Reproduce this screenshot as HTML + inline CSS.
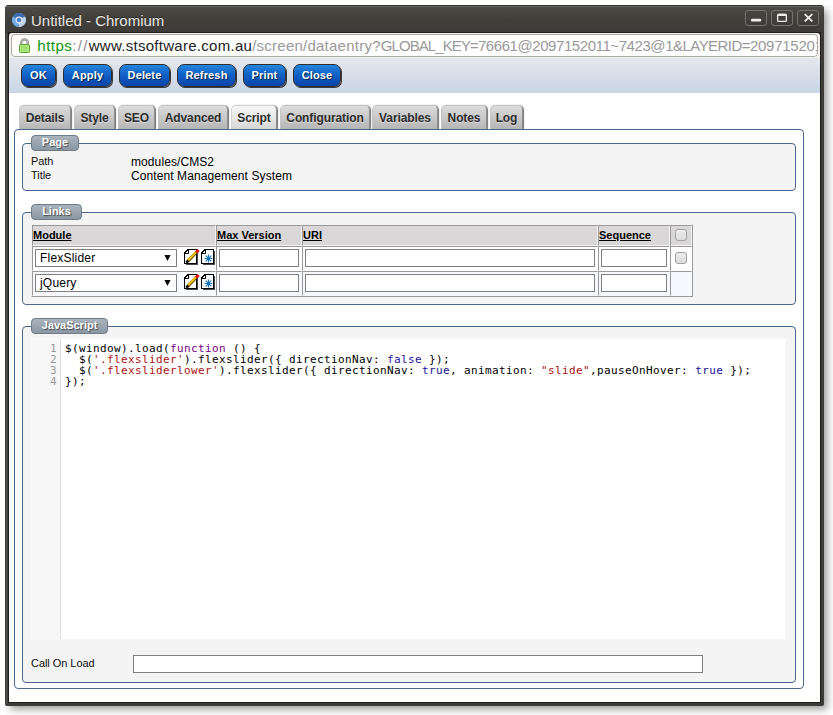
<!DOCTYPE html>
<html><head><meta charset="utf-8"><title>Untitled - Chromium</title>
<style>
*{box-sizing:border-box;margin:0;padding:0}
html,body{width:833px;height:715px;overflow:hidden;background:#fff}
body{position:relative;font-family:"Liberation Sans",sans-serif;font-size:12px;color:#000}
.abs{position:absolute}
#win{position:absolute;left:5px;top:5px;width:819px;height:701px;background:#3c3b37;border-radius:4px 4px 2px 2px;
 box-shadow:4px 4px 9px -1px rgba(0,0,0,.42);clip-path:inset(0 -20px -20px 0)}
#win:before{content:"";position:absolute;left:1px;top:3px;width:1px;height:696px;background:#55544f}
#win:after{content:"";position:absolute;left:3px;top:27px;width:813px;height:671px;background:#1f1e1a}
#titlebar{position:absolute;left:0;top:0;width:819px;height:28px;border-radius:4px 4px 0 0;
 background:linear-gradient(#35342f 0,#35342f 1px,#65645f 1px,#65645f 2px,#4c4b46 2px,#403f3a 50%,#3c3b37 100%)}
#title{position:absolute;left:26px;top:7px;font:15px/17px "Liberation Sans",sans-serif;color:#e9e7e2;white-space:nowrap;text-shadow:0 -1px 0 rgba(0,0,0,.35)}
.wb{position:absolute;top:5px;width:22px;height:16px;border:1px solid #74736e;border-radius:3px;background:linear-gradient(#45443f,#3d3c38)}
#addrbg{position:absolute;left:4px;top:28px;width:811px;height:25px;background:#f1f0ee;border-radius:3px 3px 0 0;z-index:1}
#addr{position:absolute;left:2px;top:1px;width:807px;height:23px;background:#fff;border:1px solid #aeaba3;border-radius:4px;overflow:hidden}
#urlclip{position:absolute;left:0;top:0;width:804.6px;height:21px;overflow:hidden}
#url{position:absolute;left:25.3px;top:2px;font:15px/17px "Liberation Sans",sans-serif;white-space:nowrap;color:#222}
#page{position:absolute;left:4px;top:53px;width:811px;height:644px;background:#fff;overflow:hidden;z-index:1}
#toolbar{position:absolute;left:0;top:0;width:811px;height:35px;background:linear-gradient(#e4e8ed 0,#d8dde8 50%,#d3dbe8 65%,#cad7e6 100%)}
.btn{position:absolute;top:6px;height:23px;letter-spacing:.15px;border:1px solid #2e2e30;border-radius:7px;background:linear-gradient(#2585dc 0,#1162c8 45%,#0a44a8 100%);
 color:#fff;font:bold 11px "Liberation Sans",sans-serif;text-align:center;line-height:21px;text-shadow:1px 1px 1px rgba(0,0,0,.6);box-shadow:1px 1px 0 rgba(40,40,40,.9)}
.tab{position:absolute;top:47px;height:24px;border:1px solid #c4c4c4;border-bottom:0;border-radius:5px 5px 0 0;background:linear-gradient(#dcdcdc,#c8c8c8 50%,#b6b6b6);
 color:#2d2d2d;font:bold 12px "Liberation Sans",sans-serif;letter-spacing:-.1px;text-align:center;line-height:24px;border-right-color:#8e8e8e;box-shadow:1px 0 1px rgba(0,0,0,.55);text-shadow:0 1px 0 rgba(255,255,255,.45)}
.tab.sel{background:linear-gradient(#f6f6f6,#e8e8e8 50%,#d6d6d6);border-color:#d0d0d0 #8e8e8e #d0d0d0 #d0d0d0}
#panel{position:absolute;left:5px;top:71px;width:790px;height:560px;border:1px solid #48678a;border-radius:4px;background:#fff}
.fs{position:absolute;left:7px;width:774px;border:1px solid #48678a;border-radius:4px;background:#f4f4f4}
.lg{position:absolute;left:8px;top:-9px;height:16px;border:1px solid #6f7c89;border-radius:4px;background:linear-gradient(#a9b3bd,#8b97a3);
 color:#fff;font:bold 11px "Liberation Sans",sans-serif;text-align:center;line-height:13px;text-shadow:1px 1px 1px rgba(0,0,0,.55)}
.lbl{position:absolute;font:11px "Liberation Sans",sans-serif;color:#111;white-space:nowrap;letter-spacing:-.05px}
.val{position:absolute;font:12px "Liberation Sans",sans-serif;color:#000;white-space:nowrap;letter-spacing:.09px}
table{position:absolute;left:8px;top:11px;border-collapse:separate;border-spacing:0;border:1px solid;border-color:transparent #999 #999 transparent}
td,th{border:1px solid;border-color:#999 #fff #fff #999;padding:0;vertical-align:middle;text-align:left;position:relative}
th{background:#d9d7d7;border-color:#999 #f3f3f3 #f3f3f3 #999;height:21px;font:bold 11px/13px "Liberation Sans",sans-serif;text-decoration:underline;vertical-align:top;padding-top:3px}
td{height:25px;background:#fff}
tr.alt td{background:#f8f8ff;border-color:#999 #f8f8ff #f8f8ff #999}
.in{display:block;position:absolute;border:1px solid #7f7f7f;background:#fff;height:18px;top:2px;left:2px}
.in span{position:absolute;font:12px "Liberation Sans",sans-serif;letter-spacing:.2px;white-space:nowrap}
.cb{position:absolute;width:12px;height:12px;border:1px solid #a3a3a3;border-radius:3px;background:linear-gradient(#ececec,#dcdcdc)}
.ic{position:absolute;top:2px}
#cm{position:absolute;left:9px;top:12px;width:753px;height:300px;background:#fff;overflow:hidden;box-shadow:0 0 0 1px rgba(255,255,255,.4)}
#gut{position:absolute;left:0;top:0;width:29px;height:300px;background:#f7f7f7;border-right:1px solid #e0e0e0}
pre{font:11px/11px "DejaVu Sans Mono","Liberation Mono",monospace;letter-spacing:0.378px;white-space:pre;position:absolute}
#ln{left:0;top:4px;width:25px;text-align:right;color:#999}
#code{left:33px;top:4px;color:#000}
.k{color:#708}.s{color:#a11}.a{color:#219}
</style></head><body>
<div id="win">
 <div id="titlebar">
  <svg class="abs" style="left:7px;top:8px" width="14" height="14" viewBox="0.4 0.4 15.2 15.2">
   <circle cx="8" cy="8" r="7.5" fill="#78aee4"/>
   <path d="M8 8L1.5 4.25A7.5 7.5 0 0 1 14.5 4.25Z" fill="#3a6bb0"/>
   <path d="M8 8L14.5 4.25A7.5 7.5 0 0 1 8 15.5Z" fill="#c0d4ec"/>
   <path d="M8 8L8 15.5A7.5 7.5 0 0 1 1.5 4.25Z" fill="#74aae2"/>
   <circle cx="8" cy="8" r="3.7" fill="#e4edf8"/>
   <circle cx="8" cy="8" r="2.5" fill="#4a7fd0"/>
  </svg>
  <div id="title">Untitled - Chromium</div>
  <div class="wb" style="left:740px"><svg width="20" height="14"><rect x="5" y="7.7" width="10.2" height="2.8" rx="1" fill="#f1efeb"/></svg></div>
  <div class="wb" style="left:766px"><svg width="20" height="14"><rect x="5.6" y="3.4" width="8.8" height="7" rx="1.2" fill="none" stroke="#f1efeb" stroke-width="1.3"/><rect x="5.3" y="2.8" width="9.4" height="2.2" rx="1" fill="#f1efeb"/></svg></div>
  <div class="wb" style="left:792px"><svg width="20" height="14"><path d="M6.7 3.2L14.3 10.3M14.3 3.2L6.7 10.3" stroke="#f1efeb" stroke-width="1.8" fill="none"/></svg></div>
 </div>
 <div id="addrbg"><div id="addr">
  <svg class="abs" style="left:7px;top:3px" width="12" height="16" viewBox="0 0 12 16">
   <path d="M2.3 7V4.6A3.25 3.25 0 0 1 8.8 4.6V7" fill="none" stroke="#858585" stroke-width="2.3"/>
   <path d="M2.3 7V4.6A3.25 3.25 0 0 1 8.8 4.6V7" fill="none" stroke="#d0d0d0" stroke-width="0.8"/>
   <rect x="0.5" y="6.5" width="10" height="8" rx="1" fill="#a2e070" stroke="#58a02c"/>
   <rect x="1.5" y="7.5" width="8" height="6" fill="none" stroke="#b9ec90" stroke-width="1" opacity=".8"/>
  </svg>
  <div id="urlclip"><div id="url"><span style="color:#0a960a;letter-spacing:.5px">https</span><span style="color:#8e8e8e;letter-spacing:1.27px">://</span><span style="letter-spacing:.28px"><span style="letter-spacing:.3px">www.</span>stsoftware.com.au</span><span style="color:#999;letter-spacing:.24px">/screen/dataentry?</span><span style="color:#999"><span style="letter-spacing:-.91px">GLOBAL_KEY=</span><span style="letter-spacing:-.424px">76661@2097152011~7423@1</span><span style="letter-spacing:-.56px">&amp;LAYERID=</span><span style="letter-spacing:-.255px">2097152011</span></span></div></div>
 </div></div>
 <div id="page">
  <div id="toolbar"></div>
  <div class="btn" style="left:12px;width:35px">OK</div>
  <div class="btn" style="left:54px;width:49px">Apply</div>
  <div class="btn" style="left:110px;width:51px">Delete</div>
  <div class="btn" style="left:168px;width:59px">Refresh</div>
  <div class="btn" style="left:234px;width:43px">Print</div>
  <div class="btn" style="left:284px;width:48px">Close</div>

  <div class="tab" style="left:10px;width:52px">Details</div>
  <div class="tab" style="left:65px;width:41px">Style</div>
  <div class="tab" style="left:109px;width:37px">SEO</div>
  <div class="tab" style="left:149px;width:70px">Advanced</div>
  <div class="tab sel" style="left:222px;width:46px">Script</div>
  <div class="tab" style="left:271px;width:90px">Configuration</div>
  <div class="tab" style="left:363px;width:66px">Variables</div>
  <div class="tab" style="left:432px;width:46px">Notes</div>
  <div class="tab" style="left:481px;width:33px">Log</div>

  <div id="panel">
   <div class="fs" style="top:13px;height:48px">
    <div class="lg" style="width:48px">Page</div>
    <div class="lbl" style="left:8px;top:11px">Path</div>
    <div class="val" style="left:108px;top:11px">modules/CMS2</div>
    <div class="lbl" style="left:8px;top:25px">Title</div>
    <div class="val" style="left:108px;top:25px">Content Management System</div>
   </div>
   <div class="fs" style="top:82px;height:93px">
    <div class="lg" style="width:51px">Links</div>
    <table>
     <tr><th style="width:184px">Module</th><th style="width:86px">Max Version</th><th style="width:296px">URI</th><th style="width:72px">Sequence</th><th style="width:22px"><div class="cb" style="left:4px;top:3px"></div></th></tr>
     <tr><td><div class="in" style="width:142px"><span style="left:4px;top:1px">FlexSlider</span><svg class="abs" style="left:127.5px;top:5px" width="8" height="7" viewBox="0 0 8 7"><path d="M0.4 0.1H6.6L3.5 5.9Z" fill="#0a0a0a"/></svg></div><svg class="ic" style="left:151px" width="16" height="17" viewBox="0 0 16 17"><g shape-rendering="crispEdges"><path d="M13.5 2V15.5H2" fill="none" stroke="#4a4a4a" stroke-width="1"/><path d="M4 0.5H12.5V14.5H0.5V4Z" fill="#fff" stroke="#000" stroke-width="1"/></g><path d="M0.5 4.5H4.5V0.5M0.7 4.2L4.2 0.7" fill="none" stroke="#000" stroke-width="1"/><path d="M3.4 12.6L13.4 2.2" stroke="#5a3c00" stroke-width="3"/><path d="M3.6 11.9L12.4 2.8" stroke="#f9c700" stroke-width="2"/><path d="M12.1 3.5L14.6 0.9" stroke="#e6101a" stroke-width="3"/><path d="M2.2 13.7L4.3 11.5" stroke="#000" stroke-width="2.4"/></svg><svg class="ic" style="left:168px" width="16" height="17" viewBox="0 0 16 17"><g shape-rendering="crispEdges"><path d="M13.5 2V15.5H2" fill="none" stroke="#4a4a4a" stroke-width="1"/><path d="M4 0.5H12.5V14.5H0.5V4Z" fill="#fff" stroke="#000" stroke-width="1"/></g><path d="M0.5 4.5H4.5V0.5M0.7 4.2L4.2 0.7" fill="none" stroke="#000" stroke-width="1"/><g stroke="#1575bb" stroke-width="1.2"><path d="M7.5 5.6V13.4M3.6 9.5H11.4M4.7 6.7L10.3 12.3M10.3 6.7L4.7 12.3"/></g><circle cx="7.5" cy="9.5" r="1.6" fill="#1575bb"/></svg></td><td><div class="in" style="width:80px"></div></td><td><div class="in" style="width:290px"></div></td><td><div class="in" style="width:66px"></div></td><td><div class="cb" style="left:4px;top:5px"></div></td></tr>
     <tr class="alt"><td><div class="in" style="width:142px"><span style="left:4px;top:1px">jQuery</span><svg class="abs" style="left:127.5px;top:5px" width="8" height="7" viewBox="0 0 8 7"><path d="M0.4 0.1H6.6L3.5 5.9Z" fill="#0a0a0a"/></svg></div><svg class="ic" style="left:151px" width="16" height="17" viewBox="0 0 16 17"><g shape-rendering="crispEdges"><path d="M13.5 2V15.5H2" fill="none" stroke="#4a4a4a" stroke-width="1"/><path d="M4 0.5H12.5V14.5H0.5V4Z" fill="#fff" stroke="#000" stroke-width="1"/></g><path d="M0.5 4.5H4.5V0.5M0.7 4.2L4.2 0.7" fill="none" stroke="#000" stroke-width="1"/><path d="M3.4 12.6L13.4 2.2" stroke="#5a3c00" stroke-width="3"/><path d="M3.6 11.9L12.4 2.8" stroke="#f9c700" stroke-width="2"/><path d="M12.1 3.5L14.6 0.9" stroke="#e6101a" stroke-width="3"/><path d="M2.2 13.7L4.3 11.5" stroke="#000" stroke-width="2.4"/></svg><svg class="ic" style="left:168px" width="16" height="17" viewBox="0 0 16 17"><g shape-rendering="crispEdges"><path d="M13.5 2V15.5H2" fill="none" stroke="#4a4a4a" stroke-width="1"/><path d="M4 0.5H12.5V14.5H0.5V4Z" fill="#fff" stroke="#000" stroke-width="1"/></g><path d="M0.5 4.5H4.5V0.5M0.7 4.2L4.2 0.7" fill="none" stroke="#000" stroke-width="1"/><g stroke="#1575bb" stroke-width="1.2"><path d="M7.5 5.6V13.4M3.6 9.5H11.4M4.7 6.7L10.3 12.3M10.3 6.7L4.7 12.3"/></g><circle cx="7.5" cy="9.5" r="1.6" fill="#1575bb"/></svg></td><td><div class="in" style="width:80px"></div></td><td><div class="in" style="width:290px"></div></td><td><div class="in" style="width:66px"></div></td><td></td></tr>
    </table>
   </div>
   <div class="fs" style="top:196px;height:357px">
    <div class="lg" style="width:77px">JavaScript</div>
    <div id="cm">
     <div id="gut"></div>
<pre id="ln">1
2
3
4</pre>
<pre id="code">$(window).load(<span class="k">function</span> () {
  $(<span class="s">'.flexslider'</span>).flexslider({ directionNav: <span class="a">false</span> });
  $(<span class="s">'.flexsliderlower'</span>).flexslider({ directionNav: <span class="a">true</span>, animation: <span class="s">"slide"</span>,pauseOnHover: <span class="a">true</span> });
});</pre>
    </div>
    <div class="lbl" style="left:8px;top:330px">Call On Load</div>
    <div class="in" style="left:110px;top:328px;width:570px"></div>
   </div>
  </div>
 </div>
</div>
</body></html>
